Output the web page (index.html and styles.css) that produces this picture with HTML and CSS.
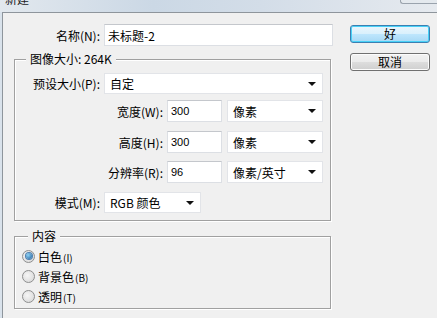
FILE: index.html
```html
<!DOCTYPE html>
<html lang="zh-CN">
<head>
    <meta charset="UTF-8">
    <title>新建</title>
    <link rel="stylesheet" href="styles.css">
</head>
<body>
    <div class="titlebar">
        <span class="title">新建</span>
        <span class="close"></span>
    </div>
    <div class="frame">
        <div class="dialog">
            <div class="form">
                <div class="row name-row">
                    <span class="lbl lbl-name">名称(N):</span>
                    <div class="input name-input">未标题-2</div>
                </div>

                <div class="group size-group">
                    <div class="legend">图像大小: 264K</div>
                    <div class="row preset-row">
                        <span class="lbl lbl-short">预设大小(P):</span>
                        <div class="select preset">自定</div>
                    </div>
                    <div class="row dim-row first">
                        <span class="lbl lbl-long">宽度(W):</span>
                        <div class="input num">300</div>
                        <div class="select unit">像素</div>
                    </div>
                    <div class="row dim-row">
                        <span class="lbl lbl-long">高度(H):</span>
                        <div class="input num">300</div>
                        <div class="select unit">像素</div>
                    </div>
                    <div class="row dim-row res">
                        <span class="lbl lbl-long">分辨率(R):</span>
                        <div class="input num">96</div>
                        <div class="select unit">像素/英寸</div>
                    </div>
                    <div class="row mode-row">
                        <span class="lbl lbl-short">模式(M):</span>
                        <div class="select mode">RGB 颜色</div>
                    </div>
                </div>

                <div class="group content-group">
                    <div class="legend legend-content">内容</div>
                    <div class="radio-row first">
                        <span class="radio checked"></span>
                        <span>白色<small>(I)</small></span>
                    </div>
                    <div class="radio-row">
                        <span class="radio"></span>
                        <span>背景色<small>(B)</small></span>
                    </div>
                    <div class="radio-row">
                        <span class="radio"></span>
                        <span>透明<small>(T)</small></span>
                    </div>
                </div>
            </div>

            <div class="actions">
                <button class="btn btn-default">好</button>
                <button class="btn">取消</button>
            </div>
        </div>
    </div>
</body>
</html>
```

FILE: styles.css
```css
* {
    box-sizing: border-box;
}

body {
    margin: 0;
    background-color: #d9e2eb;
    font-family: "Noto Sans CJK SC", sans-serif;
    font-size: 12px;
    color: #000;
    overflow: hidden;
}

.titlebar {
    height: 12px;
    overflow: hidden;
    display: flex;
    justify-content: space-between;
    background: linear-gradient(to right, #e2e8ee, #cbd8e5 35%, #d3dde8 60%, #e6eaef);
}

.title {
    margin: -9px 0 0 5px;
    font-size: 12px;
    line-height: 16px;
    color: #222;
}

.close {
    width: 37px;
    height: 4px;
    border-left: 1px solid #9aa3ad;
    border-bottom: 1px solid #9aa3ad;
    border-bottom-left-radius: 3px;
    background: #e4e9ee;
}

.frame {
    margin-left: 2px;
    height: 306px;
    border-top: 1px solid #8e959c;
    border-left: 1px solid #8e959c;
    background-color: #f0f0f0;
}

.dialog {
    display: flex;
    padding: 11px 0 0 11px;
}

.form {
    width: 319px;
}

.row {
    display: flex;
    align-items: center;
    height: 22px;
}

.lbl {
    text-align: right;
    margin-right: 4px;
    white-space: nowrap;
}

.lbl-name {
    width: 86px;
}

.lbl-short {
    width: 85px;
}

.lbl-long {
    width: 148px;
}

.input,
.select {
    height: 22px;
    background-color: #fff;
    border: 1px solid #dcdfe4;
    border-top-color: #c4c7cc;
    display: flex;
    align-items: center;
    white-space: nowrap;
}

.input {
    padding-left: 3px;
}

.name-input {
    width: 229px;
}

.num {
    width: 55px;
    font-family: "Liberation Sans", sans-serif;
    font-size: 11px;
    margin-right: 5px;
}

.select {
    padding: 0 6px 0 5px;
    border-color: #e2e4e8;
}

.select::after {
    content: "";
    margin-left: auto;
    border-left: 4px solid transparent;
    border-right: 4px solid transparent;
    border-top: 4px solid #111;
}

.preset {
    width: 219px;
    height: 21px;
}

.unit {
    width: 96px;
}

.mode {
    width: 97px;
    height: 21px;
}

.group {
    width: 317px;
    border: 1px solid #a0a0a0;
    box-shadow: 1px 1px 0 #fff, inset 1px 1px 0 #fff;
}

.legend {
    width: fit-content;
    margin: -8px 0 0 11px;
    padding: 0 4px;
    line-height: 14px;
    background-color: #f0f0f0;
}

.size-group {
    margin-top: 13px;
    padding-bottom: 7px;
}

.preset-row {
    margin-top: 7px;
    height: 21px;
}

.dim-row {
    margin-top: 9px;
}

.dim-row.first {
    margin-top: 6px;
}

.dim-row.res {
    margin-top: 8px;
}

.mode-row {
    margin-top: 9px;
    height: 21px;
}

.content-group {
    margin-top: 15px;
    padding: 0 0 2px 7px;
}

.legend-content {
    margin-left: 6px;
}

.radio-row {
    display: flex;
    align-items: center;
    height: 20px;
}

.radio-row.first {
    margin-top: 3px;
}

.radio-row small {
    font-size: 10px;
    margin-left: 1px;
}

.radio {
    width: 13px;
    height: 13px;
    margin-right: 3px;
    border-radius: 50%;
    border: 1px solid #8e8f8f;
    background: radial-gradient(circle at 40% 40%, #f6f6f6, #d4d4d4);
    display: flex;
    align-items: center;
    justify-content: center;
}

.radio.checked::after {
    content: "";
    width: 6px;
    height: 6px;
    border-radius: 50%;
    background: radial-gradient(circle at 35% 35%, #8ed3f5, #1c5d9c);
    box-shadow: 0 0 0 1px #4d7fb0;
}

.actions {
    display: flex;
    flex-direction: column;
    gap: 10px;
    margin-left: 17px;
    padding-top: 1px;
}

.btn {
    width: 80px;
    height: 18px;
    padding: 0;
    font-family: "Noto Sans CJK SC", sans-serif;
    font-size: 12px;
    line-height: 14px;
    color: #000;
    border: 1px solid #707070;
    border-radius: 3px;
    background: linear-gradient(#f2f2f2 0%, #ebebeb 50%, #dddddd 51%, #cfcfcf 100%);
    box-shadow: inset 0 0 0 1px #fcfcfc;
}

.btn-default {
    border-color: #3c7fb1;
    background: linear-gradient(#eaf6fd 0%, #d9f0fc 50%, #bee6fd 51%, #a7d9f5 100%);
    box-shadow: inset 0 0 0 1px #48d1f7;
}
```
